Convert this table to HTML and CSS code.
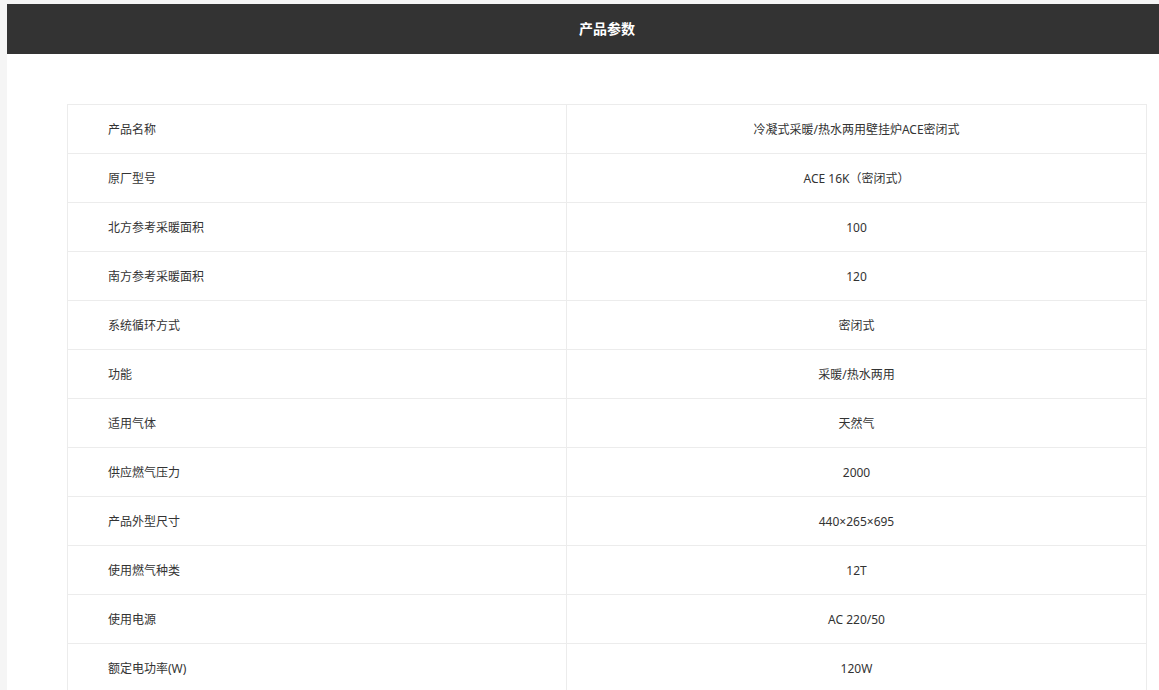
FILE: index.html
```html
<!DOCTYPE html>
<html lang="zh">
<head>
<meta charset="utf-8">
<title>产品参数</title>
<link rel="stylesheet" href="styles.css">
</head>
<body>
<div class="page">
  <div class="title-bar">产品参数</div>
  <div class="content">
    <table class="params">
      <tr><td class="label">产品名称</td><td class="value">冷凝式采暖/热水两用壁挂炉ACE密闭式</td></tr>
      <tr><td class="label">原厂型号</td><td class="value">ACE 16K（密闭式）</td></tr>
      <tr><td class="label">北方参考采暖面积</td><td class="value">100</td></tr>
      <tr><td class="label">南方参考采暖面积</td><td class="value">120</td></tr>
      <tr><td class="label">系统循环方式</td><td class="value">密闭式</td></tr>
      <tr><td class="label">功能</td><td class="value">采暖/热水两用</td></tr>
      <tr><td class="label">适用气体</td><td class="value">天然气</td></tr>
      <tr><td class="label">供应燃气压力</td><td class="value">2000</td></tr>
      <tr><td class="label">产品外型尺寸</td><td class="value">440×265×695</td></tr>
      <tr><td class="label">使用燃气种类</td><td class="value">12T</td></tr>
      <tr><td class="label">使用电源</td><td class="value">AC 220/50</td></tr>
      <tr><td class="label">额定电功率(W)</td><td class="value">120W</td></tr>
    </table>
  </div>
</div>
</body>
</html>
```
FILE: styles.css
```css
html, body {
  margin: 0;
  padding: 0;
  background: #f5f5f5;
  overflow: hidden;
}
body {
  font-family: "Noto Sans", "Noto Sans CJK SC", sans-serif;
  color: #333;
}
.page {
  width: 1200px;
  margin: 4px 0 0 7px;
  background: #fff;
}
.title-bar {
  height: 50px;
  line-height: 49px;
  background: #333;
  color: #fff;
  font-size: 14px;
  font-weight: bold;
  text-align: center;
}
.content {
  padding: 50px 60px 40px;
}
.params {
  width: 1080px;
  border-collapse: collapse;
  font-size: 12px;
  table-layout: fixed;
}
.params td {
  height: 48px;
  padding: 0;
  border: 1px solid #ececec;
  vertical-align: middle;
}
.params .label {
  width: 458px;
  padding-left: 40px;
  text-align: left;
}
.params .value {
  text-align: center;
}
```
